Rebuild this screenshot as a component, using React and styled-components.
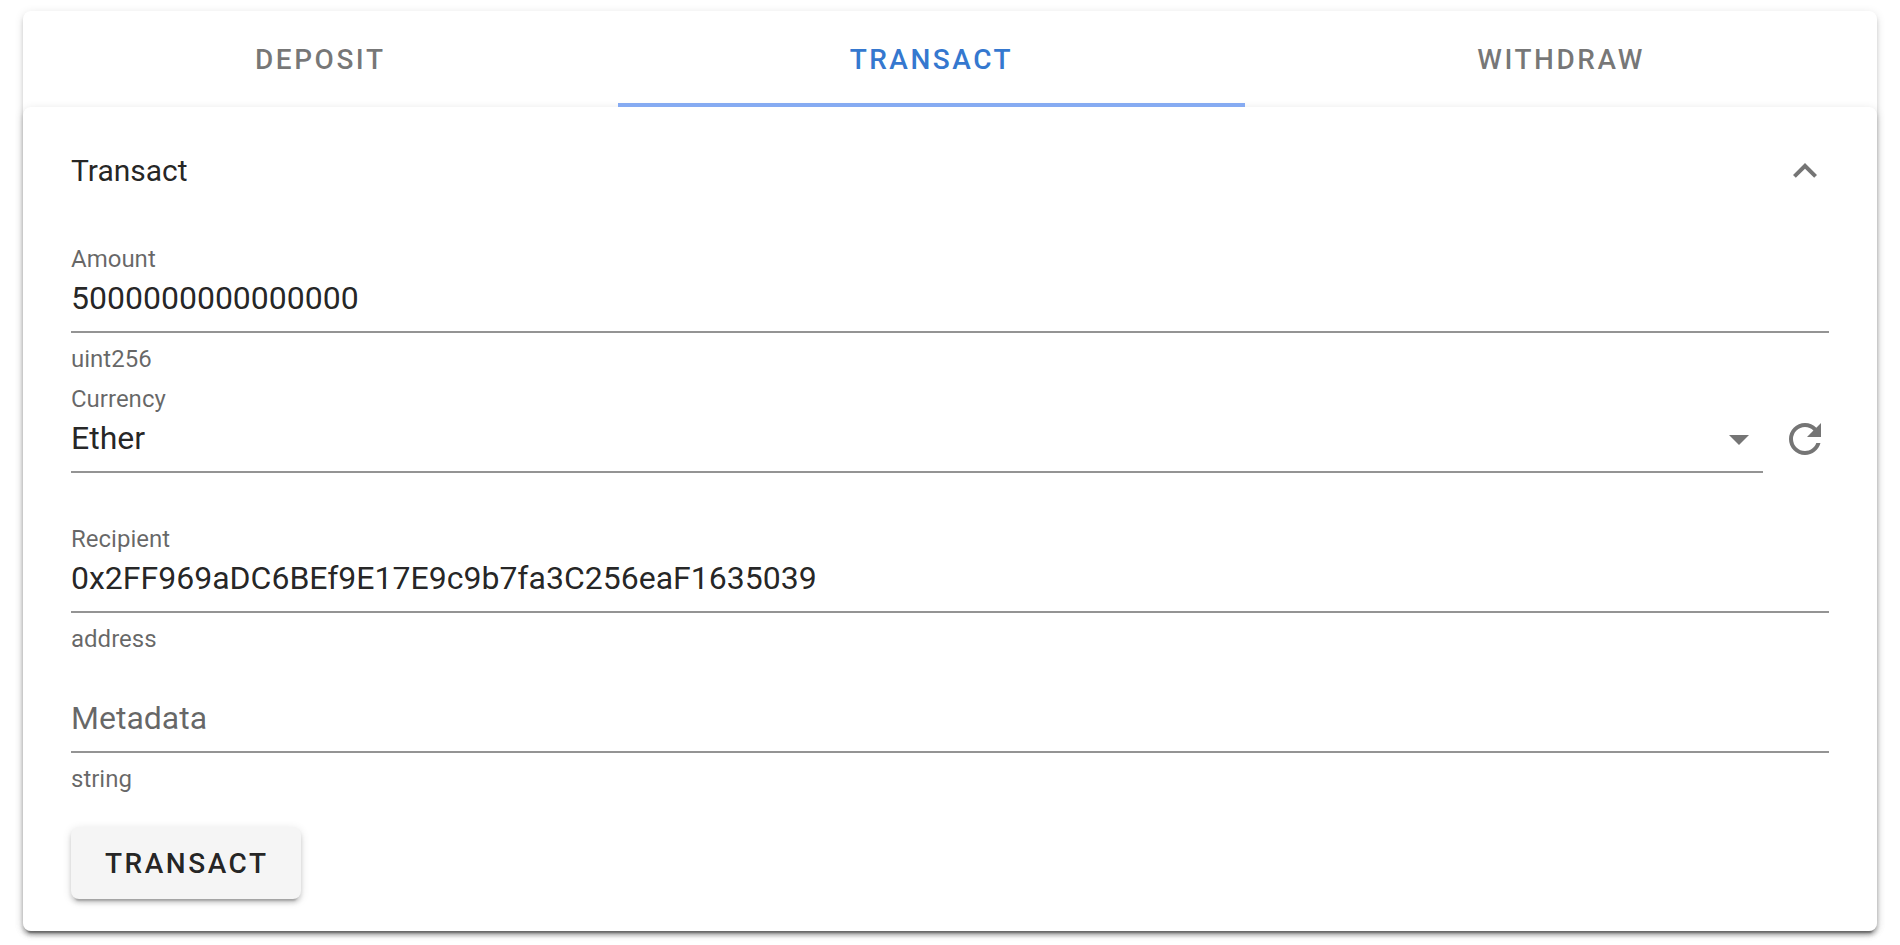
import React, { useState } from 'react';
import styled, { createGlobalStyle } from 'styled-components';

const TABS = ['Deposit', 'Transact', 'Withdraw'];
const CURRENCIES = ['Ether', 'Dai', 'USDC'];

const ICONS = {
  chevronUp: 'M7.41,15.41L12,10.83L16.59,15.41L18,14L12,8L6,14L7.41,15.41Z',
  menuDown: 'M7,10L12,15L17,10H7Z',
  refresh:
    'M17.65,6.35C16.2,4.9 14.21,4 12,4A8,8 0 0,0 4,12A8,8 0 0,0 12,20C15.73,20 18.84,17.45 19.73,14H17.65C16.83,16.33 14.61,18 12,18A6,6 0 0,1 6,12A6,6 0 0,1 12,6C13.66,6 15.14,6.69 16.22,7.78L13,11H20V4L17.65,6.35Z',
};

const Icon = ({ name }) => (
  <IconSvg viewBox="0 0 24 24" aria-hidden="true">
    <path d={ICONS[name]} />
  </IconSvg>
);

const TextField = ({ id, label, hint, defaultValue = '' }) => {
  const [value, setValue] = useState(defaultValue);

  return (
    <Field>
      <Slot>
        {value && <Label htmlFor={id}>{label}</Label>}
        <Input
          id={id}
          type="text"
          value={value}
          placeholder={label}
          aria-label={label}
          aria-describedby={`${id}-hint`}
          spellCheck={false}
          autoComplete="off"
          onChange={(e) => setValue(e.target.value)}
        />
      </Slot>
      <Hint id={`${id}-hint`}>{hint}</Hint>
    </Field>
  );
};

const CurrencyField = () => (
  <Field>
    <CurrencyRow>
      <SelectSlot>
        <Label htmlFor="currency">Currency</Label>
        <SelectBox>
          <Select id="currency" defaultValue="Ether">
            {CURRENCIES.map((name) => (
              <option key={name}>{name}</option>
            ))}
          </Select>
          <Icon name="menuDown" />
        </SelectBox>
      </SelectSlot>
      <IconButton type="button" aria-label="Refresh currencies">
        <Icon name="refresh" />
      </IconButton>
    </CurrencyRow>
    <Hint />
  </Field>
);

const App = () => {
  const [tab, setTab] = useState('Transact');
  const [open, setOpen] = useState(true);

  return (
    <>
      <GlobalStyle />
      <Page>
        <Card>
          <TabBar role="tablist">
            {TABS.map((name) => (
              <Tab
                key={name}
                type="button"
                role="tab"
                aria-selected={tab === name}
                $active={tab === name}
                onClick={() => setTab(name)}
              >
                {name}
              </Tab>
            ))}
          </TabBar>
          <Panel>
            <PanelHeader>
              <PanelTitle>{tab}</PanelTitle>
              <IconButton
                type="button"
                aria-label="Toggle panel"
                aria-expanded={open}
                onClick={() => setOpen(!open)}
              >
                <Icon name="chevronUp" />
              </IconButton>
            </PanelHeader>
            {open && (
              <Form onSubmit={(e) => e.preventDefault()}>
                <TextField id="amount" label="Amount" hint="uint256" defaultValue="5000000000000000" />
                <CurrencyField />
                <TextField
                  id="recipient"
                  label="Recipient"
                  hint="address"
                  defaultValue="0x2FF969aDC6BEf9E17E9c9b7fa3C256eaF1635039"
                />
                <TextField id="metadata" label="Metadata" hint="string" />
                <SubmitButton type="submit">{tab}</SubmitButton>
              </Form>
            )}
          </Panel>
        </Card>
      </Page>
    </>
  );
};

export default App;

const elevation = `
  box-shadow:
    0 6px 2px -4px rgba(0, 0, 0, 0.2),
    0 4px 4px 0 rgba(0, 0, 0, 0.14),
    0 2px 10px 0 rgba(0, 0, 0, 0.12);
`;

const GlobalStyle = createGlobalStyle`
  * {
    box-sizing: border-box;
  }
  body {
    margin: 0;
    background-color: #fff;
    color: rgba(0, 0, 0, 0.87);
    font-family: Roboto, sans-serif;
  }
  button, input, select {
    font-family: inherit;
  }
`;

const Page = styled.main`
  padding: 11px 23px 14px;
`;

const Card = styled.div`
  border-radius: 8px;
  background-color: #fff;
  ${elevation}
`;

const TabBar = styled.div`
  display: flex;
`;

const Tab = styled.button`
  flex: 1 1 auto;
  height: 96px;
  padding: 4px 32px 0;
  border: 0;
  border-bottom: 4px solid ${({ $active }) => ($active ? '#86abf2' : 'transparent')};
  background: none;
  color: ${({ $active }) => ($active ? '#3578cf' : 'rgba(0, 0, 0, 0.54)')};
  font-size: 28px;
  font-weight: 500;
  letter-spacing: 0.09em;
  text-transform: uppercase;
  cursor: pointer;
`;

const Panel = styled.section`
  border-radius: 8px;
  background-color: #fff;
  ${elevation}
`;

const PanelHeader = styled.header`
  display: flex;
  justify-content: space-between;
  align-items: center;
  min-height: 128px;
  padding: 0 48px;
`;

const PanelTitle = styled.h1`
  margin: 0;
  font-size: 30px;
  font-weight: 400;
  line-height: 32px;
`;

const Form = styled.form`
  padding: 0 48px 32px;
`;

const Field = styled.div`
  display: flex;
  flex-direction: column;
`;

const Slot = styled.div`
  display: flex;
  flex-direction: column;
  justify-content: flex-end;
  min-height: 98px;
  border-bottom: 2px solid #949494;
`;

const SelectSlot = styled(Slot)`
  flex: 1;
  min-width: 0;
`;

const Label = styled.label`
  color: rgba(0, 0, 0, 0.6);
  font-size: 24px;
  line-height: 24px;
`;

const Input = styled.input`
  width: 100%;
  height: 60px;
  padding: 0 0 6px;
  border: 0;
  outline: 0;
  background: none;
  color: inherit;
  font-size: 32px;
  &::placeholder {
    color: rgba(0, 0, 0, 0.6);
    opacity: 1;
  }
`;

const Hint = styled.div`
  height: 28px;
  margin-top: 14px;
  color: rgba(0, 0, 0, 0.6);
  font-size: 24px;
  line-height: 24px;
`;

const CurrencyRow = styled.div`
  display: flex;
  align-items: flex-end;
  gap: 18px;
`;

const SelectBox = styled.div`
  display: flex;
  align-items: center;
  padding-bottom: 4px;
`;

const Select = styled.select`
  flex: 1;
  height: 56px;
  padding: 0 0 2px;
  border: 0;
  outline: 0;
  appearance: none;
  background: none;
  color: inherit;
  font-size: 32px;
`;

const IconSvg = styled.svg`
  display: block;
  width: 48px;
  height: 48px;
  fill: #757575;
`;

const IconButton = styled.button`
  padding: 0;
  border: 0;
  background: none;
  cursor: pointer;
  ${CurrencyRow} & {
    margin-bottom: 10px;
  }
`;

const SubmitButton = styled.button`
  display: block;
  height: 72px;
  margin-top: 32px;
  padding: 0 32px 0 34px;
  border: 0;
  border-radius: 8px;
  background-color: #f5f5f5;
  color: inherit;
  font-size: 28px;
  font-weight: 500;
  letter-spacing: 0.09em;
  text-transform: uppercase;
  cursor: pointer;
  ${elevation}
`;
